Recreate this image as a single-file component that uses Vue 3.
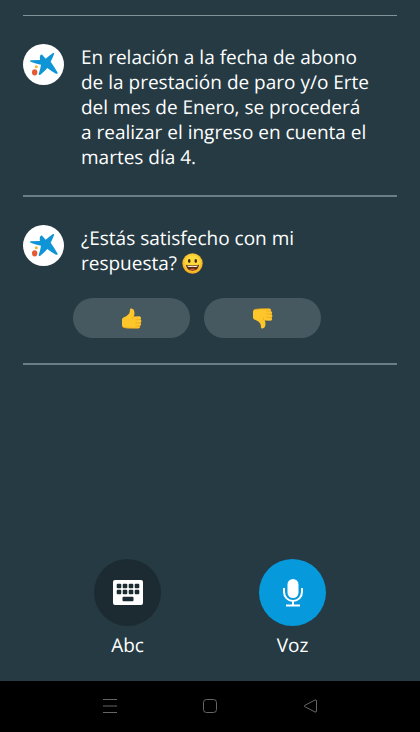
<script setup>
import { ref } from 'vue'

const answer = 'En relación a la fecha de abono de la prestación de paro y/o Erte del mes de Enero, se procederá a\u00a0realizar el ingreso en cuenta el martes día 4.'
const messages = [
  { id: 1, text: answer },
  { id: 2, text: '¿Estás satisfecho con mi respuesta?', feedback: true },
]
const choices = [
  { id: 'up', label: 'Me gusta' },
  { id: 'down', label: 'No me gusta' },
]
const vote = ref(null)
</script>

<template>
  <div class="screen">
    <main class="chat">
      <section v-for="m in messages" :key="m.id" class="message">
        <svg class="avatar" viewBox="24 27 123 123" aria-hidden="true">
          <circle cx="85.500" cy="88.500" r="61.500" fill="#fff" />
          <path
            d="M47 76Q60 75 75 75Q73 67 76 61Q80 56 84 62L92 71Q103 62 114 54Q119 53 117 58Q113 69 107 80Q119 97 128 113Q128 118 123 116Q109 109 97 99Q88 110 76 119Q71 122 71 117Q76 103 78 89Q62 86 47 80Q43 78 47 76Z"
            fill="#0f95d6"
          />
          <circle cx="64" cy="95" r="4.500" fill="#f3b530" />
          <ellipse cx="59" cy="112" rx="8" ry="9.500" fill="#e35a34" />
        </svg>
        <div class="body">
          <p class="text">
            {{ m.text }}
            <svg v-if="m.feedback" class="smile" viewBox="0 0 64 64" aria-hidden="true">
              <defs>
                <radialGradient id="face" cx="50%" cy="45%" r="55%">
                  <stop offset="0.600" stop-color="#fdd93b" />
                  <stop offset="1" stop-color="#f2a41c" />
                </radialGradient>
              </defs>
              <circle cx="32" cy="32" r="31" fill="url(#face)" />
              <ellipse cx="22" cy="24" rx="4" ry="6" fill="#422b0d" />
              <ellipse cx="42" cy="24" rx="4" ry="6" fill="#422b0d" />
              <path d="M12 36Q32 40 52 36Q50 54 32 54Q14 54 12 36Z" fill="#5b2d12" />
              <path d="M16 38Q32 42 48 38L46 42Q32 44 18 42Z" fill="#fff" />
              <path d="M22 50Q32 45 42 50Q32 55 22 50Z" fill="#d9543c" />
            </svg>
          </p>
          <div v-if="m.feedback" class="choices">
            <button
              v-for="c in choices"
              :key="c.id"
              type="button"
              class="choice"
              :aria-label="c.label"
              :aria-pressed="vote === c.id"
              @click="vote = c.id"
            >
              <svg class="thumb" :class="c.id" viewBox="0 0 64 64" aria-hidden="true">
                <path
                  d="M3 35Q3 30 9 28Q20 24 25 17Q28 10 27 5Q28 0 34 2Q41 4 41 16Q41 21 39 26L56 25Q62 26 61 31Q61 34 59 35Q63 37 62 41Q62 44 59 45Q62 48 61 51Q60 54 57 55Q59 58 57 60Q55 63 50 62L28 62Q18 62 11 60Q4 59 3 53Z"
                  fill="#fdc62b"
                />
                <path
                  d="M38 26Q34 29 34 34M59 35L45 36M59 45L45 46M57 55L45 55M6 59Q16 62 50 62"
                  fill="none"
                  stroke="#e9a01c"
                  stroke-width="2"
                  stroke-linecap="round"
                />
              </svg>
            </button>
          </div>
        </div>
      </section>
    </main>

    <div class="modes">
      <button type="button" class="mode">
        <span class="disc keyboard">
          <svg class="glyph" viewBox="0 0 30 26" aria-hidden="true">
            <rect width="30" height="25" rx="2" fill="#fff" />
            <g fill="#1c2b31">
              <rect x="3.700" y="3.700" width="4.600" height="4.600" rx="1" />
              <rect x="9.700" y="3.700" width="4.600" height="4.600" rx="1" />
              <rect x="15.700" y="3.700" width="4.600" height="4.600" rx="1" />
              <rect x="21.700" y="3.700" width="4.600" height="4.600" rx="1" />
              <rect x="3.700" y="9.700" width="4.600" height="4.600" rx="1" />
              <rect x="9.700" y="9.700" width="4.600" height="4.600" rx="1" />
              <rect x="15.700" y="9.700" width="4.600" height="4.600" rx="1" />
              <rect x="21.700" y="9.700" width="4.600" height="4.600" rx="1" />
              <rect x="9.500" y="16.700" width="11" height="4.600" rx="1" />
            </g>
          </svg>
        </span>
        <span>Abc</span>
      </button>
      <button type="button" class="mode">
        <span class="disc voice">
          <svg class="glyph" viewBox="0 0 30 26" aria-hidden="true">
            <rect x="9.500" y="-1" width="11" height="19" rx="5.500" fill="#fff" />
            <path d="M6 8V12A9 9 0 0 0 24 12V8M15 21V25M8 25.500H22" fill="none" stroke="#fff" stroke-width="2" />
          </svg>
        </span>
        <span>Voz</span>
      </button>
    </div>

    <nav class="system" aria-label="Sistema">
      <button type="button" class="key" aria-label="Recientes">
        <svg viewBox="0 0 16 16" aria-hidden="true"><path d="M1 1.500H15M1 8H15M1 14.500H15" /></svg>
      </button>
      <button type="button" class="key" aria-label="Inicio">
        <svg viewBox="0 0 16 16" aria-hidden="true"><rect x="1.500" y="1.500" width="13" height="13" rx="3" /></svg>
      </button>
      <button type="button" class="key" aria-label="Atrás">
        <svg viewBox="0 0 16 16" aria-hidden="true"><path d="M13 2L2.500 7.500Q1.500 8 2.500 8.500L13 14Q14.500 14.500 14.500 13V3Q14.500 1.500 13 2Z" /></svg>
      </button>
    </nav>
  </div>
</template>

<style>
body {
  background: #253a43;
}
</style>

<style scoped>
.screen {
  box-sizing: border-box;
  min-height: 100vh;
  display: flex;
  flex-direction: column;
  padding-top: 15px;
  background: #253a43;
  color: #fff;
  font-family: "Open Sans", "Noto Sans", sans-serif;
  font-size: 19px;
  line-height: 25px;
  text-rendering: geometricPrecision;
}

button {
  margin: 0;
  padding: 0;
  border: 0;
  background: none;
  color: inherit;
  font: inherit;
  text-rendering: inherit;
  cursor: pointer;
}

svg {
  display: block;
}

.chat {
  flex: 1;
  padding: 0 23px;
}

.message {
  display: flex;
  gap: 17px;
  padding: 28px 0 25px;
  border-bottom: 2px solid #6b7e85;
}

.message:first-child {
  border-top: 1px solid #82939a;
}

.avatar {
  flex: none;
  width: 41px;
  height: 41px;
}

.body {
  flex: 1;
  padding-top: 1px;
}

.text {
  max-width: 292px;
  margin: 0;
}

.smile {
  display: inline-block;
  width: 21px;
  height: 21px;
  vertical-align: -4px;
}

.choices {
  display: flex;
  gap: 14px;
  margin: 22px 0 0 -8px;
}

.choice {
  display: flex;
  align-items: center;
  justify-content: center;
  width: 117px;
  height: 40px;
  border-radius: 20px;
  background: #475960;
}

.thumb {
  width: 21px;
  height: 21px;
}

.down {
  transform: scaleY(-1);
}

.modes {
  display: flex;
  justify-content: center;
  gap: 98px;
  padding: 24px 24px 23px;
}

.mode {
  display: flex;
  flex-direction: column;
  align-items: center;
  gap: 7px;
}

.disc {
  display: flex;
  align-items: center;
  justify-content: center;
  width: 67px;
  height: 67px;
  border-radius: 50%;
}

.keyboard {
  background: #1c2b31;
}

.voice {
  background: #0699db;
}

.glyph {
  width: 30px;
  height: 26px;
  overflow: visible;
}

.system {
  display: flex;
  justify-content: center;
  gap: 84px;
  padding: 17px 0 18px;
  background: #000;
}

.key svg {
  width: 16px;
  height: 16px;
  fill: none;
  stroke: #666;
}
</style>
